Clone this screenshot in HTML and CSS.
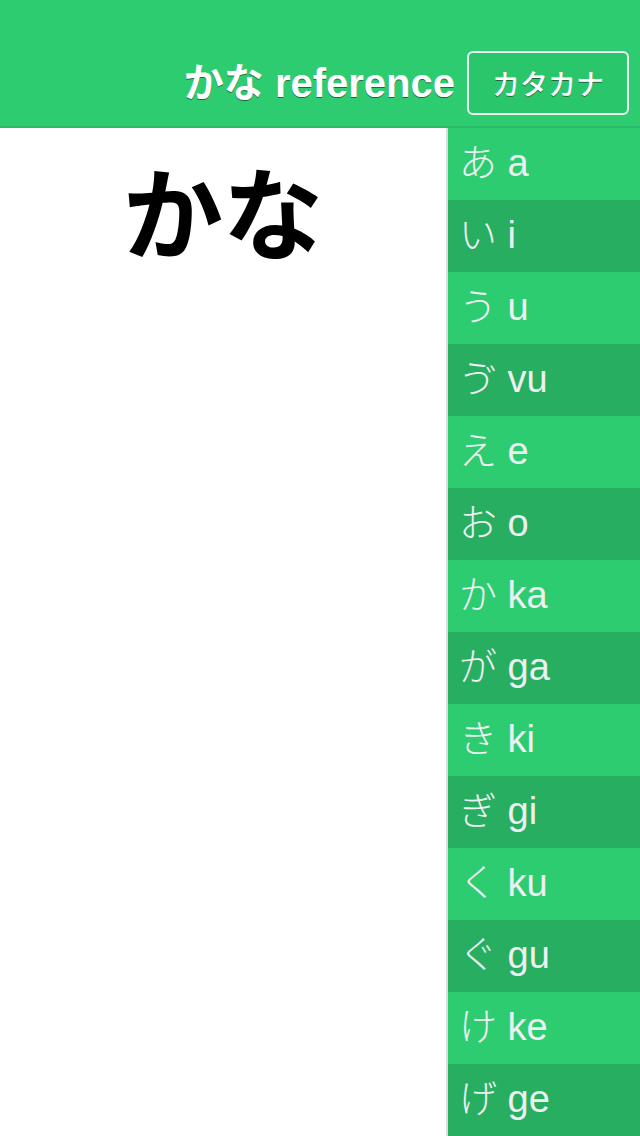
FILE: index.html
```html
<!DOCTYPE html>
<html lang="ja">
<head>
<meta charset="utf-8">
<title>かな reference</title>
<link rel="stylesheet" href="styles.css">
</head>
<body>
<header class="header">
  <h1 class="title">かな reference</h1>
  <button class="mode-btn">カタカナ</button>
</header>
<main class="main">
  <section class="display">
    <div class="big-kana">かな</div>
  </section>
  <ul class="kana-list">
    <li class="row">あ a</li>
    <li class="row alt">い i</li>
    <li class="row">う u</li>
    <li class="row alt">ゔ vu</li>
    <li class="row">え e</li>
    <li class="row alt">お o</li>
    <li class="row">か ka</li>
    <li class="row alt">が ga</li>
    <li class="row">き ki</li>
    <li class="row alt">ぎ gi</li>
    <li class="row">く ku</li>
    <li class="row alt">ぐ gu</li>
    <li class="row">け ke</li>
    <li class="row alt">げ ge</li>
  </ul>
</main>
</body>
</html>
```
FILE: styles.css
```css
* { box-sizing: border-box; }
html, body {
  margin: 0;
  padding: 0;
  width: 640px;
  height: 1136px;
  overflow: hidden;
  background: #ffffff;
  font-family: "Liberation Sans", "Noto Sans CJK JP", sans-serif;
}
.header {
  height: 128px;
  padding-top: 40px;
  padding-right: 11px;
  background: #2ecc71;
  border-bottom: 2px solid #29bb67;
  display: flex;
  justify-content: flex-end;
  align-items: center;
  gap: 12px;
}
.title {
  margin: 0;
  font-size: 40px;
  font-weight: bold;
  color: #ffffff;
  text-shadow: 0 1px 0 #1a6b3c;
  line-height: 1;
}
.mode-btn {
  width: 162px;
  height: 64px;
  margin: 0;
  padding: 0;
  background: #29c66c;
  border: 2px solid #eef3ef;
  border-radius: 6px;
  color: #ffffff;
  font-family: "Noto Sans CJK JP", sans-serif;
  font-size: 28px;
  font-weight: 500;
  text-shadow: 0 1px 0 #1a6b3c;
  cursor: pointer;
}
.main {
  display: flex;
  height: 1008px;
}
.display {
  flex: 1;
  border-right: 2px solid #dddddd;
  display: flex;
  justify-content: center;
  align-items: flex-start;
  padding-top: 16px;
}
.big-kana {
  font-family: "Noto Sans CJK JP", sans-serif;
  font-size: 100px;
  font-weight: bold;
  color: #000000;
  line-height: 1.3;
}
.kana-list {
  list-style: none;
  margin: 0;
  padding: 0;
  width: 192px;
}
.row {
  height: 72px;
  display: flex;
  align-items: center;
  padding-left: 11px;
  padding-bottom: 10px;
  background: #2ecc71;
  color: #ecf0f1;
  font-size: 38px;
  font-weight: 300;
  font-family: "Liberation Sans", "Noto Sans CJK JP", sans-serif;
}
.row.alt {
  background: #27ae60;
}
```
